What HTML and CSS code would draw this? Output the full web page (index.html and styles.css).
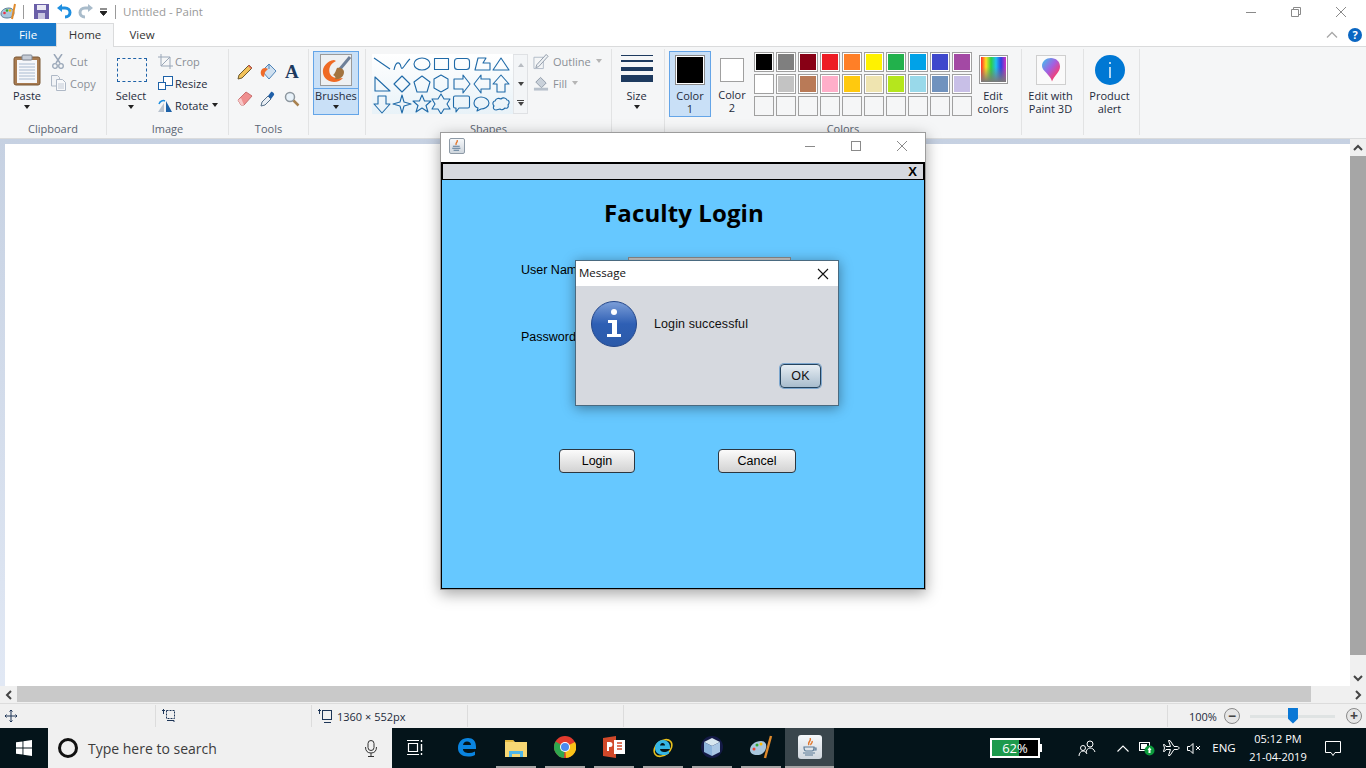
FILE: index.html
```html
<!DOCTYPE html>
<html lang="en">
<head>
<meta charset="utf-8">
<title>Untitled - Paint</title>
<link rel="stylesheet" href="styles.css">
</head>
<body>
<div class="app">
  <header class="titlebar">
    <svg class="qa-paint" width="18" height="18" viewBox="0 0 18 18"><path d="M1 11c0-4 4-6 8-6 3 0 5 2 5 5s-3 5-7 5c-3 0-6-1-6-4z" fill="#a9c6dc" stroke="#5d7f96"/><circle cx="4.500" cy="10" r="1.300" fill="#e34"/><circle cx="7" cy="7.500" r="1.300" fill="#3a3"/><circle cx="10" cy="7.500" r="1.300" fill="#fb0"/><path d="M15 1l-3 15" stroke="#e08a2c" stroke-width="2"/></svg>
    <span class="qa-sep"></span>
    <svg class="qa-save" width="15" height="15" viewBox="0 0 15 15"><rect width="15" height="15" fill="#6a5fa8"/><rect x="3" y="1" width="9" height="5" fill="#e9e8f4"/><rect x="4" y="9" width="7" height="6" fill="#c9c6e0"/></svg>
    <svg class="qa-undo" width="15" height="15" viewBox="0 0 15 15"><path d="M3 4h5c3 0 5 2 5 4.500S11 13 8 13" fill="none" stroke="#1e8fe0" stroke-width="3"/><path d="M0 4l5-4v8z" fill="#1e8fe0"/></svg>
    <svg class="qa-redo" width="15" height="15" viewBox="0 0 15 15"><path d="M12 4H7C4 4 2 6 2 8.500S4 13 7 13" fill="none" stroke="#a9bccb" stroke-width="3"/><path d="M15 4l-5-4v8z" fill="#a9bccb"/></svg>
    <svg class="qa-drop" width="7" height="8" viewBox="0 0 7 8"><path d="M0 1h7M0 3.500h7L3.500 7.500z" stroke="#222" fill="#222"/></svg>
    <span class="qa-sep second"></span>
    <span class="doc-title">Untitled - Paint</span>
    <div class="win-controls">
      <svg width="16" height="16" viewBox="0 0 16 16"><path d="M3 8.500h10" stroke="#8a8a8a"/></svg>
      <svg width="16" height="16" viewBox="0 0 16 16"><path d="M3.500 5.500h7v7h-7zM5.500 5V3.500h7v7H11" fill="none" stroke="#8a8a8a"/></svg>
      <svg width="16" height="16" viewBox="0 0 16 16"><path d="M3 3l10 10M13 3L3 13" stroke="#8a8a8a"/></svg>
    </div>
  </header>

  <nav class="tabs">
    <span class="tab file">File</span>
    <span class="tab home">Home</span>
    <span class="tab view">View</span>
    <div class="tabs-right">
      <svg width="12" height="8" viewBox="0 0 12 8"><path d="M1 6.500l5-5 5 5" fill="none" stroke="#a8a8a8" stroke-width="1.300"/></svg>
      <span class="help">?</span>
    </div>
  </nav>

  <section class="ribbon">
    <div class="group g-clip">
      <div class="group-body">
        <div class="big w38">
          <div class="big-icon">
            <svg width="28" height="32" viewBox="0 0 28 32"><rect x="1" y="3" width="26" height="28" rx="2" fill="#a87b50" stroke="#7b5836"/><rect x="4" y="6" width="20" height="23" fill="#f6f7fa"/><path d="M6 10h16M6 13h16M6 16h16M6 19h16M6 22h16M6 25h16" stroke="#a9bad0"/><rect x="9" y="1" width="10" height="5" rx="1" fill="#c6ccd6" stroke="#7e8794"/></svg>
          </div>
          <span class="big-label">Paste</span>
          <span class="caret"></span>
        </div>
        <div class="small-col">
          <div class="small dim"><span class="small-icon"><svg width="12" height="15" viewBox="0 0 12 15"><path d="M2 0l6 9M10 0L4 9" stroke="#9aa7b8" stroke-width="1.500"/><circle cx="3" cy="12" r="2.300" fill="none" stroke="#9aa7b8" stroke-width="1.300"/><circle cx="9" cy="12" r="2.300" fill="none" stroke="#9aa7b8" stroke-width="1.300"/></svg></span>Cut</div>
          <div class="small dim"><span class="small-icon"><svg width="15" height="16" viewBox="0 0 15 16"><path d="M.500.500h6l2 2V11H.500z" fill="#f1f3f6" stroke="#aeb8c6"/><path d="M5.500 4.500h6l3 3v8h-9z" fill="#f8f9fb" stroke="#aeb8c6"/><path d="M7 9h6M7 11h6M7 13h6" stroke="#c2cad6"/></svg></span>Copy</div>
        </div>
      </div>
      <div class="group-label">Clipboard</div>
    </div>

    <div class="group g-image">
      <div class="group-body">
        <div class="big w38">
          <div class="big-icon"><span class="marquee"></span></div>
          <span class="big-label">Select</span>
          <span class="caret"></span>
        </div>
        <div class="small-col tight">
          <div class="small dim"><span class="small-icon"><svg width="15" height="15" viewBox="0 0 15 15"><path d="M3 0v12h12M0 3h12v12M12 3L3 12" fill="none" stroke="#9aa7b8"/></svg></span>Crop</div>
          <div class="small"><span class="small-icon"><svg width="15" height="14" viewBox="0 0 15 14"><rect x="5.500" y=".5" width="9" height="9" fill="#fff" stroke="#1e62a8"/><rect x=".5" y="6.500" width="7" height="7" fill="#fff" stroke="#1e62a8"/></svg></span>Resize</div>
          <div class="small"><span class="small-icon"><svg width="16" height="15" viewBox="0 0 16 15"><path d="M9 3l6 11H9z" fill="#1e62a8"/><path d="M7 5L1 14h6z" fill="#b9c3cf"/><path d="M2 6c1-3 4-4 6-3" fill="none" stroke="#1e8fe0" stroke-width="1.500"/></svg></span>Rotate<span class="caret inline"></span></div>
        </div>
      </div>
      <div class="group-label">Image</div>
    </div>

    <div class="group g-tools">
      <div class="group-body tools-grid">
        <svg width="16" height="16" viewBox="0 0 16 16"><path d="M1 15l1-4L12 1l3 3L5 14z" fill="#f2c25a" stroke="#6d5a2e"/><path d="M11 2l3 3 1-1-3-3z" fill="#e2665a"/></svg>
        <svg width="17" height="17" viewBox="0 0 17 17"><path d="M9 1l7 7-7 8-7-8z" fill="#cfe0f0" stroke="#4f84b8"/><path d="M9 1v5" stroke="#4f84b8"/><path d="M1 8c1-3 4-4 7-2L5 9l-1 5C2 14 0 11 1 8z" fill="#ef6b2a"/></svg>
        <span class="tool-a">A</span>
        <svg width="16" height="15" viewBox="0 0 16 15"><path d="M1 9l8-8 6 4-8 9H4z" fill="#ef8f8f" stroke="#c96f6f"/><path d="M1 9l3 5h3L4 7z" fill="#f7c8c8"/></svg>
        <svg width="16" height="16" viewBox="0 0 16 16"><path d="M1 15l1-4 6-6 3 3-6 6z" fill="#e9eef4" stroke="#55708a"/><path d="M8 5l3-4c1-1 4 2 3 3l-3 4z" fill="#1f5fa8"/></svg>
        <svg width="16" height="16" viewBox="0 0 16 16"><circle cx="6" cy="6" r="4.500" fill="#e8f2fa" stroke="#8d979f" stroke-width="1.500"/><path d="M9.500 9.500l5 5" stroke="#a8814f" stroke-width="2.500"/></svg>
      </div>
      <div class="group-label">Tools</div>
    </div>

    <div class="group g-brush">
      <div class="group-body">
        <div class="brushes">
          <div class="brushes-top">
            <svg width="32" height="32" viewBox="0 0 32 32"><rect x=".5" y=".5" width="31" height="31" fill="#eef0f2" stroke="#9a9a9a"/><path d="M14 6C7 7 2 13 3 19c1 7 9 11 16 8 2-1 3-2 4-3-6 1-11 0-13-4-2-5 0-10 6-13z" fill="#ef6a24"/><path d="M30 3L20 15" stroke="#6d7f98" stroke-width="3"/><path d="M17 14c3-1 7 1 7 4 0 5-5 8-9 7 1-2 0-3-2-4 2-1 3-5 4-7z" fill="#a2733f"/></svg>
          </div>
          <div class="brushes-bottom"><span class="big-label">Brushes</span><span class="caret"></span></div>
        </div>
      </div>
      <div class="group-label"></div>
    </div>

    <div class="group g-shapes">
      <div class="group-body">
        <div class="gallery">
          <svg class="gallery-shapes" width="141" height="60" viewBox="0 0 141 60" fill="none" stroke="#1f6aa8" stroke-width="1.100" stroke-linejoin="round">
            <path d="M2 4l16 11M22 16c2-10 6-8 7-3s5-5 9-8"/>
            <ellipse cx="50" cy="10" rx="8" ry="6"/>
            <rect x="62.500" y="4.500" width="14" height="11"/>
            <rect x="82.500" y="4.500" width="15" height="11" rx="3"/>
            <path d="M103 16l3-12h8l-3 5h7v7zM121 16l8-12 8 12z"/>
            <path d="M3 23v14h15zM30 22l8 8-8 8-8-8zM50 22l8 6-3 10h-10l-3-10zM69 21l7 4v9l-7 4-7-4v-9zM82 25h9v-4l7 9-7 9v-4h-9zM118 25h-9v-4l-7 9 7 9v-4h9zM129 21l8 9h-4v8h-8v-8h-4z"/>
            <path d="M6 42h8v8h4l-8 9-8-9h4zM30 41l2 7 7 2-7 2-2 7-2-7-7-2 7-2zM50 41l2.500 6h6.500l-5 4.500 2 6.500-6-4-6 4 2-6.500-5-4.500h6.500zM69 40l3 5h6l-3 5 3 5h-6l-3 5-3-5h-6l3-5-3-5h6zM83 42h13a1.500 1.500 0 0 1 1.500 1.500v9a1.500 1.500 0 0 1-1.500 1.500h-9l-3 4v-4h-1a1.500 1.500 0 0 1-1.500-1.500v-9a1.500 1.500 0 0 1 1.500-1.500z"/>
            <path d="M105 57l1-3c-3-1-4-3-4-5 0-4 4-6 7-6s8 2 8 6-5 6-8 6z"/>
            <path d="M124 56c-3 0-3-3-2-4-2-2-1-5 1-5 1-3 4-3 6-2 2-2 5-1 6 1 2 0 3 3 1 5 1 2-1 4-3 3-2 2-4 2-5 1z"/>
          </svg>
          <div class="gallery-scroll">
            <span class="gs up"></span>
            <span class="gs down"></span>
            <span class="gs more"></span>
          </div>
        </div>
        <div class="outline-col">
          <div class="small dim"><span class="small-icon"><svg width="17" height="17" viewBox="0 0 17 17"><path d="M1 4h10v12H1z" fill="none" stroke="#b0bac6"/><path d="M4 12L14 1l2 2L6 14l-3 1z" fill="#eef1f4" stroke="#8f9aa8"/></svg></span>Outline<span class="caret inline pale"></span></div>
          <div class="small dim"><span class="small-icon"><svg width="17" height="17" viewBox="0 0 17 17"><path d="M8 2l6 6-5 5-6-6z" fill="#c9d1da" stroke="#8f9aa8"/><rect x="1" y="13" width="15" height="3" fill="#b8c1cc"/></svg></span>Fill<span class="caret inline pale"></span></div>
        </div>
      </div>
      <div class="group-label">Shapes</div>
    </div>

    <div class="group g-size">
      <div class="group-body">
        <div class="big size-btn">
          <div class="big-icon size-lines"><i class="l1"></i><i class="l2"></i><i class="l3"></i><i class="l4"></i></div>
          <span class="big-label">Size</span>
          <span class="caret"></span>
        </div>
      </div>
      <div class="group-label"></div>
    </div>

    <div class="group g-colors">
      <div class="group-body">
        <div class="color-btn active">
          <span class="color-one"></span>
          <span class="big-label">Color<br>1</span>
        </div>
        <div class="color-btn">
          <span class="color-two"></span>
          <span class="big-label">Color<br>2</span>
        </div>
        <div class="swatches">
          <i class="c-black"></i><i class="c-grey"></i><i class="c-maroon"></i><i class="c-red"></i><i class="c-orange"></i><i class="c-yellow"></i><i class="c-green"></i><i class="c-cyan"></i><i class="c-indigo"></i><i class="c-purple"></i>
          <i class="c-white"></i><i class="c-silver"></i><i class="c-brown"></i><i class="c-pink"></i><i class="c-gold"></i><i class="c-cream"></i><i class="c-lime"></i><i class="c-sky"></i><i class="c-steel"></i><i class="c-lilac"></i>
          <i></i><i></i><i></i><i></i><i></i><i></i><i></i><i></i><i></i><i></i>
        </div>
        <div class="edit-colors">
          <span class="rainbow"></span>
          <span class="big-label">Edit<br>colors</span>
        </div>
      </div>
      <div class="group-label">Colors</div>
    </div>

    <div class="group g-3d">
      <div class="group-body">
        <div class="tile-btn">
          <span class="tile3d">
            <svg width="20" height="26" viewBox="0 0 20 26"><defs><linearGradient id="p3d" x1="0" y1="0" x2="1" y2="1"><stop offset="0" stop-color="#37c6f0"/><stop offset=".45" stop-color="#a45fe0"/><stop offset=".75" stop-color="#f0407a"/><stop offset="1" stop-color="#f5a623"/></linearGradient></defs><path d="M10 1c5 0 9 3.500 9 8.500 0 6-6 9-8 15-1-4-3-5-6-9-2-2-4-4-4-6.500C1 4.500 5 1 10 1z" fill="url(#p3d)"/></svg>
          </span>
          <span class="big-label">Edit with<br>Paint 3D</span>
        </div>
      </div>
      <div class="group-label"></div>
    </div>

    <div class="group g-alert">
      <div class="group-body">
        <div class="tile-btn">
          <span class="alert-ico"><svg width="30" height="30" viewBox="0 0 30 30"><circle cx="15" cy="15" r="15" fill="#0078d4"/><path d="M15 12v11M15 7v2" stroke="#fff" stroke-width="1.400"/></svg></span>
          <span class="big-label">Product<br>alert</span>
        </div>
      </div>
      <div class="group-label"></div>
    </div>
  </section>

  <main class="workspace">
    <div class="canvas-row">
      <div class="canvas"></div>
      <div class="vscroll">
        <span class="sb-btn"><svg width="10" height="8" viewBox="0 0 10 8"><path d="M1 6l4-4 4 4" fill="none" stroke="#444" stroke-width="2"/></svg></span>
        <span class="vthumb"></span>
        <span class="sb-fill"></span>
        <span class="sb-btn"><svg width="10" height="8" viewBox="0 0 10 8"><path d="M1 2l4 4 4-4" fill="none" stroke="#444" stroke-width="2"/></svg></span>
      </div>
    </div>
    <div class="hscroll">
      <span class="sb-btn"><svg width="8" height="10" viewBox="0 0 8 10"><path d="M6 1L2 5l4 4" fill="none" stroke="#444" stroke-width="2"/></svg></span>
      <span class="hthumb"></span>
      <span class="sb-fill"></span>
      <span class="sb-btn"><svg width="8" height="10" viewBox="0 0 8 10"><path d="M2 1l4 4-4 4" fill="none" stroke="#444" stroke-width="2"/></svg></span>
    </div>
  </main>

  <footer class="statusbar">
    <div class="cell"><svg width="12" height="12" viewBox="0 0 12 12"><path d="M6 0v12M0 6h12M4.500 1.500L6 0l1.500 1.500M4.500 10.500L6 12l1.500-1.500M1.500 4.500L0 6l1.500 1.500M10.500 4.500L12 6l-1.500 1.500" fill="none" stroke="#1d3557"/></svg></div>
    <div class="cell"><svg width="14" height="14" viewBox="0 0 14 14"><path d="M1.500 0v5M0 1.500h3M12 13v-1.500H5" fill="none" stroke="#1d3557"/><rect x="4.500" y="1.500" width="8" height="8" fill="none" stroke="#1d3557" stroke-dasharray="2 1"/></svg></div>
    <div class="cell"><svg width="14" height="14" viewBox="0 0 14 14"><path d="M1.500 0v5M0 1.500h3M13 13.500H6" fill="none" stroke="#1d3557"/><rect x="4.500" y="1.500" width="9" height="9" fill="none" stroke="#1d3557"/></svg><span class="status-text">1360 × 552px</span></div>
    <div class="cell"></div>
    <div class="cell wide"></div>
    <div class="cell zoom">
      <span class="status-text">100%</span>
      <span class="zoom-btn">−</span>
      <span class="slider"><span class="slider-thumb"></span></span>
      <span class="zoom-btn">+</span>
    </div>
  </footer>

  <div class="taskbar">
    <div class="start"><svg width="16" height="16" viewBox="0 0 16 16" fill="#fff"><path d="M0 2.300l6.500-.9v6.200H0zM7.400 1.300L16 0v7.600H7.400zM0 8.500h6.500v6.100L0 13.700zM7.400 8.500H16V16l-8.600-1.200z"/></svg></div>
    <div class="search">
      <span class="cortana"></span>
      <span class="search-text">Type here to search</span>
      <svg class="mic" width="12" height="17" viewBox="0 0 12 17"><rect x="3" y=".5" width="6" height="10" rx="3" fill="none" stroke="#333"/><path d="M.5 7c0 4 2 6 5.500 6s5.500-2 5.500-6M6 13v3.500M3 16.500h6" fill="none" stroke="#333"/></svg>
    </div>
    <div class="task view-btn"><span class="task-ico"><svg width="16" height="15" viewBox="0 0 16 15"><path d="M0 .5h12M0 14.500h12M1.500 3.500h9v8h-9z" fill="none" stroke="#fff" stroke-width="1.200"/><path d="M14.500 0v2M14.500 4v7M14.500 13v2" stroke="#fff" stroke-width="1.400"/></svg></span></div>
    <div class="task"><span class="task-ico"><svg width="20" height="20" viewBox="0 0 20 20"><path d="M1 11C1 5 5 1 11 1c5 0 8 3 8 9v2H6c0 3 3 4 6 4 2 0 4-.5 6-1.500v3.500c-2 1-4 1.500-7 1.500-6 0-10-3-10-8.500zM6 8h8c0-2-1.500-3.500-4-3.500S6.500 6 6 8z" fill="#0a84e0"/></svg></span></div>
    <div class="task on"><span class="task-ico"><svg width="22" height="19" viewBox="0 0 22 19"><path d="M0 2h8l2 2h12v15H0z" fill="#f7d774"/><path d="M0 2h8l1 2H0z" fill="#e4b93f"/><path d="M4 19v-6h14v6h-3v-3H7v3z" fill="#4fb6e8"/></svg></span></div>
    <div class="task on"><span class="task-ico"><svg width="22" height="22" viewBox="0 0 22 22"><circle cx="11" cy="11" r="11" fill="#e33b2e"/><path d="M11 11L21 6a11 11 0 0 1-9 16z" fill="#fbc318"/><path d="M11 11l-1 11A11 11 0 0 1 1.500 5.500z" fill="#2fa84f"/><circle cx="11" cy="11" r="5" fill="#fff"/><circle cx="11" cy="11" r="4" fill="#4a8af0"/></svg></span></div>
    <div class="task on"><span class="task-ico"><svg width="22" height="22" viewBox="0 0 22 22"><path d="M0 2l13-2v22L0 20z" fill="#d1492a"/><rect x="11" y="4" width="11" height="14" fill="#fff"/><path d="M14 7h5M14 10h5M14 13h5" stroke="#d1492a" stroke-width="1.500"/><path d="M4 6h3a2.500 2.500 0 0 1 0 5H6v4H4z" fill="#fff"/></svg></span></div>
    <div class="task on"><span class="task-ico"><svg width="24" height="24" viewBox="0 0 24 24"><ellipse cx="12" cy="13" rx="10" ry="7" fill="none" stroke="#e8c11d" stroke-width="1.500" transform="rotate(-40 12 13)"/><path d="M4 13c0-5 4-8 8-8s7 3 7 7v2H9c0 2 2 3 4 3s3-.5 5-1.500v3c-2 1-3 1.500-6 1.500-5 0-8-3-8-7zM9 10.500h5c0-1.500-1-2.500-2.500-2.500S9.500 9 9 10.500z" fill="#34b6e6"/></svg></span></div>
    <div class="task on"><span class="task-ico"><svg width="22" height="22" viewBox="0 0 22 22"><circle cx="11" cy="11" r="11" fill="#141a46"/><path d="M11 2l8 4-8 4-8-4z" fill="#d7e6ef"/><path d="M3 6l8 4v10l-8-4z" fill="#8db4dc"/><path d="M19 6l-8 4v10l8-4z" fill="#a9c6e4"/></svg></span></div>
    <div class="task on"><span class="task-ico"><svg width="24" height="24" viewBox="0 0 24 24"><path d="M1 15c0-5 5-9 11-9 4 0 6 3 5 7-1 5-5 7-9 7-4 0-7-2-7-5z" fill="#a9c7dd"/><circle cx="5" cy="14" r="1.500" fill="#e43"/><circle cx="8" cy="10" r="1.500" fill="#3a3"/><circle cx="12" cy="9" r="1.500" fill="#fb0"/><path d="M22 1l-6 22" stroke="#e08a2c" stroke-width="2.400"/></svg></span></div>
    <div class="task on active"><span class="task-ico"><span class="java-tile"><svg width="16" height="19" viewBox="0 0 16 19"><path d="M8 0c2 3-3 4-1 7M10 3c1 2-2 3-1 4" fill="none" stroke="#e2762a" stroke-width="1.400"/><path d="M2 9h10c0 3-1 4-2 4H4c-1 0-2-1-2-4zM12 10h2v2h-2M1 15h12M3 17h8" fill="none" stroke="#5b7a96" stroke-width="1.200"/></svg></span></span></div>

    <div class="battery"><span class="battery-fill"></span><span class="battery-text">62%</span></div>
    <div class="tray people"><svg width="18" height="17" viewBox="0 0 18 17"><circle cx="12" cy="4" r="3" fill="none" stroke="#fff"/><circle cx="5" cy="8" r="2.500" fill="none" stroke="#fff"/><path d="M8 13c0-3 2-5 4-5s4 1 5 4M1 16c0-3 2-5 4-5s3 1 4 3" fill="none" stroke="#fff"/></svg></div>
    <div class="tray"><svg width="12" height="7" viewBox="0 0 12 7"><path d="M.5 6.500L6 1l5.500 5.500" fill="none" stroke="#fff" stroke-width="1.100"/></svg></div>
    <div class="tray"><svg width="16" height="15" viewBox="0 0 16 15"><rect x=".5" y="1.500" width="10" height="8" fill="none" stroke="#fff"/><rect x="2" y="3" width="6" height="5" fill="#fff"/><circle cx="10.500" cy="9.500" r="5" fill="#0c9a3c"/><path d="M10.500 6l2 3h-1v3h-2V9h-1z" fill="#fff"/></svg></div>
    <div class="tray"><svg width="17" height="16" viewBox="0 0 17 16"><path d="M16 8c0-1-1-1.500-2-1.500h-3L7 .5H5.500L7.500 6.500H3L1.500 4.500H.5L1.500 8l-1 3.500h1L3 9.500h4.500l-2 6H7l4-6h3c1 0 2-.5 2-1.500z" fill="none" stroke="#fff"/></svg></div>
    <div class="tray narrow"><svg width="15" height="11" viewBox="0 0 15 11"><path d="M.5 3.500h2.500L6 .5v10l-3-3H.5zM9 3l4 4M13 3L9 7" fill="none" stroke="#fff"/></svg></div>
    <div class="tray-text eng">ENG</div>
    <div class="tray-text clock">05:12 PM<br>21-04-2019</div>
    <div class="tray notify"><svg width="16" height="15" viewBox="0 0 16 15"><path d="M.5.500h15v11H10l-2 3-2-3H.5z" fill="none" stroke="#fff"/></svg></div>
  </div>
</div>

<section class="java-win">
  <div class="java-title">
    <span class="java-tile small-tile"><svg width="12" height="13" viewBox="0 0 16 19"><path d="M8 0c2 3-3 4-1 7" fill="none" stroke="#e2762a" stroke-width="2"/><path d="M2 9h10M1 12h12M3 15h8" stroke="#5b7a96" stroke-width="1.500"/></svg></span>
    <div class="java-controls">
      <svg width="14" height="14" viewBox="0 0 14 14"><path d="M2 7.500h10" stroke="#8a8a8a"/></svg>
      <svg width="14" height="14" viewBox="0 0 14 14"><rect x="2.500" y="2.500" width="9" height="9" fill="none" stroke="#8a8a8a"/></svg>
      <svg width="14" height="14" viewBox="0 0 14 14"><path d="M2 2l10 10M12 2L2 12" stroke="#8a8a8a"/></svg>
    </div>
  </div>
  <div class="inner-frame">
    <div class="inner-bar"><span>X</span></div>
    <div class="login-panel">
      <h1>Faculty Login</h1>
      <div class="form-row first"><label>User Name</label><span class="field"></span></div>
      <div class="form-row"><label>Password</label></div>
      <div class="login-actions">
        <span class="jbtn login">Login</span>
        <span class="jbtn cancel">Cancel</span>
      </div>
    </div>
  </div>
</section>

<section class="msg-dialog">
  <div class="msg-title"><span>Message</span><svg width="12" height="12" viewBox="0 0 12 12"><path d="M1 1l10 10M11 1L1 11" stroke="#111" stroke-width="1.100"/></svg></div>
  <div class="msg-body">
    <div class="msg-main">
      <svg width="46" height="46" viewBox="0 0 46 46"><defs><linearGradient id="infoG" x1="0" y1="0" x2="0" y2="1"><stop offset="0" stop-color="#7d9fd8"/><stop offset=".5" stop-color="#2e5fb4"/><stop offset="1" stop-color="#2c5aa8"/></linearGradient></defs><circle cx="23" cy="23" r="22.500" fill="url(#infoG)" stroke="#24478a"/><circle cx="23" cy="11" r="3" fill="#fff"/><path d="M17 19h9v14h4v3H16v-3h5V22h-4z" fill="#fff"/></svg>
      <span>Login successful</span>
    </div>
    <div class="msg-actions"><span class="ok">OK</span></div>
  </div>
</section>
</body>
</html>
```

FILE: styles.css
```css
* { box-sizing: border-box; }
html, body { margin: 0; padding: 0; }
body {
  width: 1366px;
  height: 768px;
  overflow: hidden;
  position: relative;
  font-family: "Open Sans", "Noto Sans", sans-serif;
  font-size: 11.5px;
  color: #1e2b3c;
  background: #fff;
}
.app { display: flex; flex-direction: column; width: 1366px; height: 768px; }

/* title bar */
.titlebar { height: 23px; display: flex; align-items: center; background: #fff; flex: none; }
.qa-paint { margin-left: 0; }
.qa-sep { width: 1px; height: 14px; background: #9a9a9a; margin-left: 5px; }
.qa-sep.second { margin-left: 8px; }
.qa-save { margin-left: 10px; }
.qa-undo { margin-left: 8px; }
.qa-redo { margin-left: 6px; }
.qa-drop { margin-left: 7px; }
.doc-title { margin-left: 7px; color: #9a9a9a; font-size: 11.5px; }
.win-controls { margin-left: auto; margin-right: 17px; display: flex; gap: 29px; }

.tabs { height: 24px; display: flex; align-items: stretch; background: #fff; border-bottom: 1px solid #dadbdc; flex: none; position: relative; }
.tab { display: flex; align-items: center; justify-content: center; font-size: 11.5px; }
.tab.file { width: 56px; background: #1979ca; color: #fff; height: 23px; }
.tab.home { width: 58px; background: #f5f6f7; border: 1px solid #dadbdc; border-bottom: 0; height: 24px; color: #333; padding-bottom: 2px; }
.tab.view { width: 56px; color: #333; height: 23px; }
.tabs-right { margin-left: auto; margin-right: 4px; display: flex; align-items: center; gap: 10px; }
.help { width: 14px; height: 14px; border-radius: 50%; background: #0a66c2; color: #fff; font-size: 11px; font-weight: 700; line-height: 14px; text-align: center; }

/* ribbon */
.ribbon { height: 92px; background: #f5f6f7; border-bottom: 1px solid #dadbdc; display: flex; flex: none; padding-top: 2px; }
.group { height: 86px; border-right: 1px solid #e2e3e4; display: flex; flex-direction: column; flex: none; }
.group-body { height: 72px; display: flex; align-items: flex-start; }
.group-label { height: 14px; line-height: 16px; text-align: center; color: #5a6472; font-size: 11px; }
.g-clip { width: 107px; } .g-clip .group-body { padding-left: 8px; }
.g-image { width: 122px; } .g-image .group-body { padding-left: 5px; }
.g-tools { width: 80px; }
.g-brush { width: 57px; } .g-brush .group-body { padding-left: 4px; padding-top: 2px; }
.g-shapes { width: 246px; } .g-shapes .group-body { padding-left: 6px; padding-top: 5px; }
.g-size { width: 53px; }
.g-colors { width: 357px; } .g-colors .group-body { padding-left: 4px; padding-top: 2px; }
.g-3d { width: 62px; } .g-3d .group-body { padding-right: 4px; }
.g-alert { width: 56px; } .g-alert .group-body { padding-right: 4px; }

.big { display: flex; flex-direction: column; align-items: center; margin-top: 2px; }
.w38 { width: 38px; }
.big-icon { height: 38px; display: flex; align-items: center; justify-content: center; }
.big-label { display: block; line-height: 13px; text-align: center; font-size: 11px; white-space: nowrap; }
.caret { display: block; width: 0; height: 0; border: 3.500px solid transparent; border-top: 4px solid #222; border-bottom: 0; margin-top: 3px; }
.caret.inline { display: inline-block; margin: 0 0 0 1px; }
.caret.pale { border-top-color: #b5b5b5; }
.small-col { margin-top: 1px; margin-left: 4px; display: flex; flex-direction: column; }
.small-col.tight { margin-left: 7px; }
.small { height: 22px; display: flex; align-items: center; gap: 4px; font-size: 11px; white-space: nowrap; }
.tight .small { gap: 2px; }
.small.dim { color: #8a8f96; }
.small-icon { width: 16px; display: flex; justify-content: center; align-items: center; }
.marquee { display: block; width: 30px; height: 24px; margin-left: 2px; border: 1px dashed #1e62a8; }

.tools-grid { display: grid; grid-template-columns: repeat(3, 23.500px); grid-template-rows: repeat(2, 27px); padding: 9px 0 0 4px; justify-items: center; align-items: center; }
.tool-a { font-family: "Liberation Serif", serif; font-weight: 700; font-size: 19px; line-height: 19px; color: #1d3a5f; }

.brushes { width: 46px; height: 64px; border: 1px solid #64a5e8; background: #c9e0f7; }
.brushes-top { height: 37px; display: flex; align-items: center; justify-content: center; border-bottom: 1px solid #64a5e8; }
.brushes-bottom { display: flex; flex-direction: column; align-items: center; }

.gallery { width: 156px; height: 60px; border: 1px solid #dfe1e4; display: flex; background: #f3f5f7; }
.gallery-shapes { display: block; flex: none; margin: -1px 0 0 -1px; background: linear-gradient(#ffffff, #e8f2f8); }
.gallery-scroll { flex: 1; display: flex; flex-direction: column; border-left: 1px solid #e3e5e8; }
.gs { flex: 1; display: flex; flex-direction: column; align-items: center; justify-content: center; gap: 1px; }
.gs::before { content: ""; border: 3.500px solid transparent; }
.gs.up::before { border-bottom: 4px solid #b8bcc2; border-top: 0; }
.gs.down::before { border-top: 4px solid #444; border-bottom: 0; }
.gs.more::before { width: 7px; height: 1px; border: 0; background: #444; }
.gs.more::after { content: ""; border: 3.500px solid transparent; border-top: 4px solid #444; border-bottom: 0; }
.outline-col { margin-left: 5px; margin-top: -4px; display: flex; flex-direction: column; }

.size-btn { width: 49px; }
.size-lines { flex-direction: column; width: 32px; justify-content: flex-start; align-items: stretch; padding-top: 4px; }
.size-lines i { display: block; background: #1d3a5f; }
.l1 { height: 1px; margin-bottom: 4px; }
.l2 { height: 2px; margin-bottom: 5px; }
.l3 { height: 4px; margin-bottom: 4px; }
.l4 { height: 7px; }

.color-btn { width: 42px; height: 66px; display: flex; flex-direction: column; align-items: center; border: 1px solid transparent; }
.color-btn.active { background: #c9e0f7; border-color: #64a5e8; }
.color-btn .big-label { margin-top: 3px; }
.color-btn.active .big-label { margin-top: 4px; }
.color-one { display: block; width: 30px; height: 30px; margin-top: 3px; background: #000; border: 1px solid #8a8a8a; box-shadow: inset 0 0 0 1px #fff; }
.color-two { display: block; width: 24px; height: 24px; margin-top: 6px; margin-bottom: 3px; background: #fff; border: 1px solid #a0a0a0; }
.swatches { margin-left: 1px; display: grid; grid-template-columns: repeat(10, 20px); grid-auto-rows: 20px; gap: 2px; margin-top: 1px; }
.swatches i { display: block; border: 1px solid #a0a0a0; box-shadow: inset 0 0 0 1px #fff; background: #f5f6f7; }
.swatches i:nth-child(n+21) { box-shadow: none; }
.swatches .c-black { background: #000; } .swatches .c-grey { background: #7f7f7f; } .swatches .c-maroon { background: #880015; }
.swatches .c-red { background: #ed1c24; } .swatches .c-orange { background: #ff7f27; } .swatches .c-yellow { background: #fff200; }
.swatches .c-green { background: #22b14c; } .swatches .c-cyan { background: #00a2e8; } .swatches .c-indigo { background: #3f48cc; }
.swatches .c-purple { background: #a349a4; } .swatches .c-white { background: #fff; } .swatches .c-silver { background: #c3c3c3; }
.swatches .c-brown { background: #b97a57; } .swatches .c-pink { background: #ffaec9; } .swatches .c-gold { background: #ffc90e; }
.swatches .c-cream { background: #efe4b0; } .swatches .c-lime { background: #b5e61d; } .swatches .c-sky { background: #99d9ea; }
.swatches .c-steel { background: #7092be; } .swatches .c-lilac { background: #c8bfe7; }
.edit-colors { width: 44px; display: flex; flex-direction: column; align-items: center; margin-left: -1px; margin-top: 4px; }
.rainbow { display: block; width: 29px; height: 29px; border: 2px solid #fff; outline: 1px solid #9a9a9a; outline-offset: -1px; background: linear-gradient(#0000 40%, #7a7a7a), linear-gradient(90deg, #ff2a2a, #ffdf20, #30d040, #20c0f0, #3040e0, #d030c0); margin-bottom: 5px; }
.tile-btn { width: 100%; display: flex; flex-direction: column; align-items: center; padding-top: 6px; }
.tile3d { width: 30px; height: 30px; border: 1px solid #cfcfcf; background: #fafafa; display: flex; align-items: center; justify-content: center; margin-bottom: 4px; }
.alert-ico { height: 30px; display: block; margin-bottom: 4px; }
.alert-ico svg { display: block; }

/* workspace */
.workspace { height: 564px; flex: none; display: flex; flex-direction: column; background: linear-gradient(#c6d1e2, #e2e9f5); }
.canvas-row { height: 547px; display: flex; }
.canvas { width: 1345px; margin: 5px 0 0 5px; background: #fff; }
.vscroll { width: 16px; display: flex; flex-direction: column; background: #f0f0f0; }
.sb-btn { flex: none; width: 16px; height: 17px; display: flex; align-items: center; justify-content: center; background: #f0f0f0; }
.vthumb { display: block; height: 499px; background: #a6a6a6; }
.sb-fill { flex: 1; background: #f0f0f0; }
.hscroll { height: 17px; display: flex; background: #f0f0f0; }
.hscroll .sb-btn { width: 17px; }
.hthumb { display: block; width: 1294px; height: 16px; background: #c9c9c9; }

/* status bar */
.statusbar { height: 25px; flex: none; display: flex; background: #f0f0f0; border-top: 1px solid #dcdcdc; }
.cell { width: 156px; display: flex; align-items: center; padding-left: 5px; border-right: 1px solid #dcdcdc; margin: 1px 0; }
.cell:nth-child(n+2) { padding-left: 6px; }
.cell.wide { width: 544px; }
.cell.zoom { width: 198px; border-right: 0; padding-left: 21px; }
.status-text { font-size: 11px; color: #1e2b3c; margin-left: 5px; white-space: nowrap; }
.zoom .status-text { margin-left: 0; }
.zoom-btn { width: 16px; height: 16px; margin-left: 7px; border-radius: 50%; border: 1px solid #8a8a8a; background: #e6e6e6; display: flex; align-items: center; justify-content: center; font-size: 14px; line-height: 14px; font-weight: 700; color: #444; }
.slider { width: 85px; height: 3px; margin-left: 10px; background: #dfe3e3; position: relative; display: block; }
.slider-thumb { position: absolute; left: 38px; top: -7px; width: 10px; height: 16px; background: #0a78d6; clip-path: polygon(0 0, 100% 0, 100% 70%, 50% 100%, 0 70%); }
.zoom-btn:last-child { margin-left: 11px; }

/* taskbar */
.taskbar { height: 40px; flex: none; display: flex; align-items: stretch; background: #04141a; color: #fff; }
.start { width: 48px; display: flex; align-items: center; justify-content: center; }
.search { width: 344px; background: #f0f0f0; display: flex; align-items: center; padding-left: 10px; }
.cortana { display: block; width: 20px; height: 20px; border-radius: 50%; border: 3px solid #111; }
.search-text { margin-left: 10px; font-size: 14px; color: #3c3c3c; }
.mic { margin-left: auto; margin-right: 15px; }
.task { width: 49px; display: flex; flex-direction: column; align-items: center; }
.task.view-btn { width: 38px; margin-left: 4px; margin-right: 8px; }
.task-ico { flex: 1; display: flex; align-items: center; justify-content: center; }
.task::after { content: ""; display: block; width: 40px; height: 2px; }
.task.on::after { background: #a6a6a6; }
.task.active { background: #3a464c; }
.task.active::after { width: 100%; }
.java-tile { display: flex; width: 24px; height: 24px; align-items: center; justify-content: center; background: linear-gradient(#f6f8fa, #cfd6dd); border-radius: 3px; }
.battery { width: 50px; height: 20px; margin: 10px 0 0 156px; border: 2px solid #fff; background: #000; position: relative; font-size: 13px; line-height: 16px; text-align: center; color: #fff; }
.battery::after { content: ""; position: absolute; right: -4px; top: 4px; width: 2px; height: 8px; background: #fff; }
.battery-fill { position: absolute; left: 0; top: 0; bottom: 0; width: 27px; background: #1d9a4c; }
.battery-text { position: relative; }
.tray { width: 24px; display: flex; align-items: center; justify-content: center; }
.tray.people { margin-left: 35px; margin-right: 12px; }
.tray.narrow { width: 22px; }
.tray-text { display: flex; align-items: center; justify-content: center; text-align: center; font-size: 11.5px; color: #fff; line-height: 18px; }
.eng { width: 38px; }
.clock { width: 70px; font-size: 11px; }
.tray.notify { width: 40px; }

/* java window */
.java-win { position: absolute; left: 440px; top: 132px; width: 486px; height: 458px; background: #fff; border: 1px solid #9c9c9c; box-shadow: 0 4px 14px rgba(0,0,0,.35); display: flex; flex-direction: column; font-family: "Liberation Sans", Arial, sans-serif; color: #000; }
.java-title { height: 29px; display: flex; align-items: center; padding: 0 0 3px 8px; flex: none; }
.small-tile { width: 16px; height: 16px; border: 1px solid #8e9aa6; border-radius: 2px; }
.java-controls { margin-left: auto; margin-right: 16px; display: flex; gap: 32px; }
.inner-frame { flex: 1; display: flex; flex-direction: column; border: 1px solid #000; border-top: 0; }
.inner-bar { height: 18px; background: #d6d9df; border: 2px solid #000; border-bottom: 1px solid #000; text-align: right; font-weight: 700; font-size: 13px; line-height: 16px; padding-right: 6px; margin-left: -1px; width: calc(100% + 2px); flex: none; }
.login-panel { flex: 1; background: #66c8ff; display: flex; flex-direction: column; }
.login-panel h1 { margin: 16px 0 0; padding-left: 2px; text-align: center; font: 700 24px/34px "Open Sans", sans-serif; letter-spacing: 0.1px; }
.form-row { display: flex; align-items: center; height: 24px; padding-left: 79px; font-size: 12.500px; position: relative; }
.form-row.first { margin-top: 28px; }
.form-row.first + .form-row { margin-top: 43px; }
.field { width: 163px; height: 30px; background: #c8c8c8; border: 1px solid #8c8c8c; position: absolute; left: 186px; top: -1px; }
.login-actions { display: flex; margin-top: 100px; padding-left: 117px; }
.jbtn { height: 24px; display: flex; align-items: center; justify-content: center; font-size: 12.500px; border: 1px solid #2b3640; border-radius: 4px; background: linear-gradient(#fbfbfb, #d2d2d2); }
.jbtn.login { width: 76px; }
.jbtn.cancel { width: 78px; margin-left: 83px; }

/* message dialog */
.msg-dialog { position: absolute; left: 575px; top: 260px; width: 264px; height: 146px; background: #d6d9df; border: 1px solid #4a6a80; box-shadow: 0 2px 12px rgba(0,0,0,.4); display: flex; flex-direction: column; font-family: "Liberation Sans", Arial, sans-serif; font-size: 12.500px; color: #111; letter-spacing: 0.1px; }
.msg-title { height: 25px; background: #fff; display: flex; align-items: center; justify-content: space-between; padding: 0 9px 0 3px; flex: none; font-family: "Open Sans", sans-serif; font-size: 11.500px; letter-spacing: 0; }
.msg-title span { margin-top: -2px; }
.msg-body { flex: 1; padding: 15px 16px 0 15px; display: flex; flex-direction: column; }
.msg-main { display: flex; align-items: center; gap: 17px; height: 46px; }
.msg-actions { display: flex; justify-content: flex-end; margin-top: 17px; }
.ok { width: 41px; height: 24px; margin-right: 1px; display: flex; align-items: center; justify-content: center; border: 1px solid #25435e; border-radius: 4px; background: linear-gradient(#e6edf3, #a8bccd); box-shadow: 0 0 0 1px #7da7cf; }
```
